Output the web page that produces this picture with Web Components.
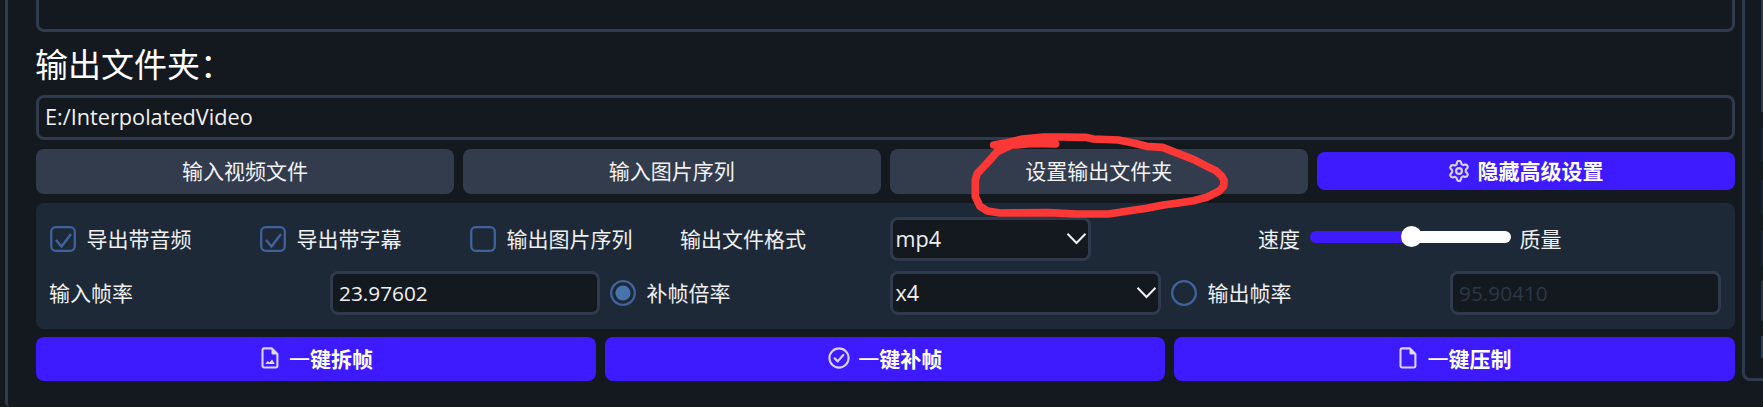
<!DOCTYPE html>
<html lang="zh-CN"><head><meta charset="utf-8"><title>输出设置</title>
<style>
html,body{margin:0;height:100%;overflow:hidden;background:#14181f}
body{font:21px/1 "Open Sans","Noto Sans CJK SC",sans-serif;color:#f0f0f0}
</style></head><body>
<app-window></app-window>
<script>
const define=(name,html,setup)=>customElements.define(name,class extends HTMLElement{
  constructor(){super();const t=document.createElement('template');t.innerHTML=html;
    this.attachShadow({mode:'open'}).append(t.content.cloneNode(true));}
  connectedCallback(){if(setup)setup(this,this.shadowRoot);}
});

define('ui-button',`<style>
:host{display:flex;box-sizing:border-box;flex:1 1 0;min-width:0;height:45px;border-radius:8px;background:#333c4d;align-items:center;justify-content:center;white-space:nowrap;color:#f2f2f2}
:host([primary]){background:#3d1aff;font-weight:700;color:#fff;height:44px}
:host([slim]){height:38px;align-self:center}
span{display:block;line-height:30px}
</style><slot name="icon"></slot><span><slot></slot></span>`);

const icons={
gear:'<path d="M9 2.2 10 1h2l1 1.2.5 1.9 1.7 1 1.9-.5 1.7.3 1 1.9-.6 1.5-1.4 1.4v2.1l1.4 1.4.6 1.5-1 1.8-1.7.4-1.9-.6-1.7 1-.5 1.9L12 20.9h-2l-1-1.2-.5-1.9-1.7-1-1.9.6-1.7-.4-1-1.8.6-1.5 1.4-1.4v-2.1L2.8 8.8l-.6-1.5 1-1.9 1.7-.3 1.9.5 1.7-1Z"/><circle cx="11" cy="11" r="2.9"/>',
image:'<path d="M5 1.4h8L18.4 7v11.8a1.7 1.7 0 0 1-1.7 1.7H5.2a1.7 1.7 0 0 1-1.7-1.7V3a1.6 1.6 0 0 1 1.5-1.6Z"/><path d="M13 1.8V7h5.2Z" fill="#e6e0ff" stroke-width="1"/><path d="m6.3 17 2.4-3 1.8 1.6 2.5-3 2.8 4.4Z" fill="#e6e0ff" stroke="none"/>',
file:'<path d="M5 1.4h8L18.4 7v11.8a1.7 1.7 0 0 1-1.7 1.7H5.2a1.7 1.7 0 0 1-1.7-1.7V3a1.6 1.6 0 0 1 1.5-1.6Z"/><path d="M13 1.8V7h5.2Z" fill="#e6e0ff" stroke-width="1"/>',
check:'<circle cx="11" cy="11" r="9.6"/><path d="m6.7 11.4 3 3 5.6-6.4" stroke-width="2.2"/>'};
define('ui-icon',`<style>:host{display:block;width:22px;height:22px;margin:0 8px 3px 0}:host([name=gear]){margin-bottom:0}svg{display:block;overflow:visible}</style>
<svg width="22" height="22" viewBox="0 0 22 22" fill="none" stroke="#d9d1ff" stroke-width="2.1" stroke-linejoin="round" stroke-linecap="round"></svg>`,
(h,r)=>{r.querySelector('svg').innerHTML=icons[h.getAttribute('name')]});

define('ui-field',`<style>
:host{display:flex;box-sizing:border-box;height:44px;border:3px solid #2f3a4c;border-radius:8px;background:#14181f;align-items:center;padding:0 6px;white-space:nowrap;font-size:20.8px}
:host([path]){height:45px;font-size:21.7px}
:host([disabled]){color:#2c3747}
span{line-height:30px}
</style><span><slot></slot></span>`);

define('ui-select',`<style>
:host{display:flex;box-sizing:border-box;height:44px;border:3px solid #2f3a4c;border-radius:8px;background:#14181f;align-items:center;justify-content:space-between;padding:0 1.5px 0 2.5px;font-size:21.6px}
span{line-height:30px}svg{display:block}
</style><span><slot></slot></span><svg width="21" height="14" viewBox="0 0 21 14" fill="none" stroke="#f0f0f0" stroke-width="2"><path d="m1.5 1.7 9 9.3 9-9.3"/></svg>`);

define('ui-choice',`<style>
:host{display:flex;align-items:center;white-space:nowrap}svg{display:block;margin-right:10.5px}
span{line-height:30px}
</style><svg width="26" height="26" viewBox="0 0 26 26" fill="none" stroke="#3f639a" stroke-width="2.3"></svg><span><slot></slot></span>`,
(h,r)=>{const on=h.hasAttribute('checked');
r.querySelector('svg').innerHTML=h.hasAttribute('radio')
 ?'<circle cx="13" cy="13" r="11.8"/>'+(on?'<circle cx="13" cy="13" r="7.6" fill="#4873ad" stroke="none"/>':'')
 :'<rect x="1.2" y="1.2" width="23.6" height="23.6" rx="4.5"/>'+(on?'<path d="m6 14 5.5 6.5L21 8" stroke-width="2.4"/>':'')});

define('ui-slider',`<style>
:host{display:flex;height:22px;align-items:center;margin-bottom:4px}
i{display:block;height:12px}
.a{width:94px;background:#3d1aff;border-radius:6px 0 0 6px}
.k{width:21px;height:21px;border-radius:50%;background:#fff;margin:0 -3px}
.b{flex:1;background:#fff;border-radius:0 6px 6px 0}
</style><i class="a"></i><i class="k"></i><i class="b"></i>`);

define('settings-panel',`<style>
:host{display:grid;box-sizing:border-box;height:126px;padding:14px 14px 14px;row-gap:10px;grid-template-rows:44px 44px;border-radius:8px;background:#1e2938}
.row{display:grid;align-items:center;line-height:30px;white-space:nowrap}
.one{grid-template-columns:210px 210px 210px 210px 201px 167px 52px 201px 1fr}
.two{grid-template-columns:281px 270px 10px 280px 271px 10px 279px 271px;margin-left:-1px}
.last{padding-left:8.5px}
</style>
<div class="row one">
<ui-choice checked>导出带音频</ui-choice><ui-choice checked>导出带字幕</ui-choice><ui-choice>输出图片序列</ui-choice><span>输出文件格式</span><ui-select>mp4</ui-select><i></i><span>速度</span><ui-slider></ui-slider><span class="last">质量</span>
</div>
<div class="row two">
<span>输入帧率</span><ui-field>23.97602</ui-field><i></i><ui-choice radio checked>补帧倍率</ui-choice><ui-select>x4</ui-select><i></i><ui-choice radio>输出帧率</ui-choice><ui-field disabled>95.90410</ui-field>
</div>`);

define('side-panel',`<style>
:host{display:block;box-sizing:border-box;width:21px;height:381px;border:solid #2f3a4c;border-width:0 0 3px 3px;border-radius:0 0 0 8px;overflow:hidden}
div{display:flex;flex-direction:column;margin-left:16px}
i{display:block;background:#182133}
</style><div>
<i style="height:112px;background:#2a3548"></i>
<i style="height:33px;margin-top:16px"></i><i style="height:34px;margin-top:19px"></i><i style="height:35px;margin-top:17px"></i>
<i style="height:40px;margin-top:15px;background:#273144"></i><i style="height:22px;margin-top:15px;background:#253f5e"></i></div>`);

define('red-mark',`<style>:host{position:absolute;left:960px;top:125px;pointer-events:none}svg{display:block;overflow:visible}</style>
<svg width="280" height="100" viewBox="0 0 840 300" fill="none" stroke="#fc3836" stroke-width="23" stroke-linecap="round" stroke-linejoin="round">
<path d="M287 57 215 55 170 60 101 60 140 53 188 42 250 36 310 36 377 37 400 42 475 45 520 54 560 64 608 67 640 80 700 103 735 121 767 137 783 151 792 166 791 183 778 198 760 207 740 217 700 227 655 234 610 240 560 250 500 259 445 267 350 267 265 263 120 264 82 258 60 244 46 215 46 165 52 145 80 116 112 80 150 62 190 48"/></svg>`);

define('app-window',`<style>
:host{display:flex;position:relative;box-sizing:border-box;width:1763px;height:407px;overflow:hidden;align-items:flex-start}
.main{display:flex;box-sizing:border-box;width:1737px;height:407px;margin-left:5px;padding-left:28px;border-left:3px solid #2f3a4c;border-bottom-left-radius:5px;flex-direction:column}
.main>*{width:1698.5px}
.log{box-sizing:border-box;height:32px;border:3px solid #2f3a4c;border-top:0;border-radius:0 0 8px 8px;flex:none}
h1{margin:0 0 0 -1px;height:62.5px;font-size:33px;font-weight:400;line-height:66px;color:#fff}
.bar{display:flex;gap:9px}
.inputs{margin:9px 0}.runs{margin-top:8.5px}
.thin{font-weight:400}
</style>
<div class="main">
<div class="log"></div>
<h1>输出文件夹：</h1>
<ui-field path>E:/InterpolatedVideo</ui-field>
<div class="bar inputs"><ui-button>输入视频文件</ui-button><ui-button>输入图片序列</ui-button><ui-button>设置输出文件夹</ui-button><ui-button primary slim><ui-icon slot="icon" name="gear"></ui-icon>隐藏高级设置</ui-button></div>
<settings-panel></settings-panel>
<div class="bar runs"><ui-button primary><ui-icon slot="icon" name="image"></ui-icon><span class="thin">一</span>键拆帧</ui-button><ui-button primary><ui-icon slot="icon" name="check"></ui-icon><span class="thin">一</span>键补帧</ui-button><ui-button primary><ui-icon slot="icon" name="file"></ui-icon><span class="thin">一</span>键压制</ui-button></div>
</div>
<side-panel></side-panel>
<red-mark></red-mark>`);
</script></body></html>
